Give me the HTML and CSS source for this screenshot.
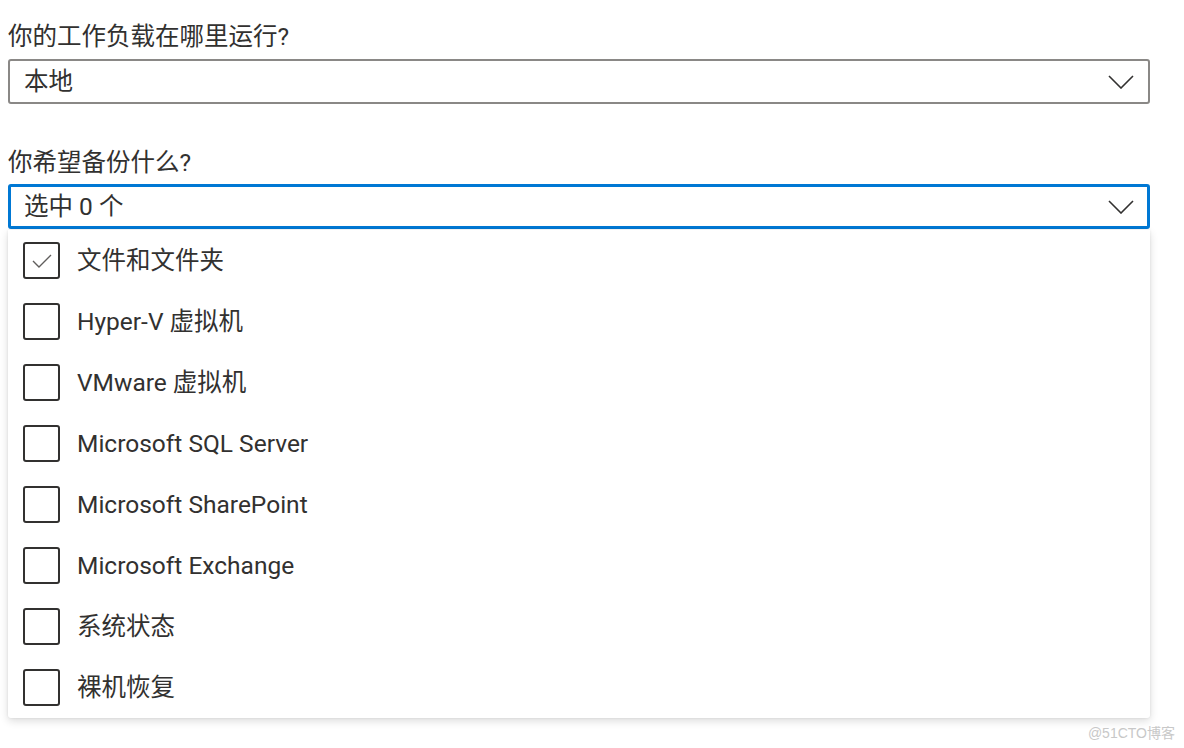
FILE: index.html
```html
<!DOCTYPE html>
<html lang="zh">
<head>
<meta charset="utf-8">
<link rel="stylesheet" href="styles.css">
</head>
<body>
<div class="page">
  <div class="label first">你的工作负载在哪里运行?</div>
  <div class="select">
    <span class="value">本地</span>
    <svg class="chev" width="26" height="14" viewBox="0 0 26 14"><path d="M1 1 L13 13 L25 1" fill="none" stroke="#323130" stroke-width="1.6"/></svg>
  </div>
  <div class="label second">你希望备份什么?</div>
  <div class="select focused">
    <span class="value">选中 0 个</span>
    <svg class="chev" width="26" height="14" viewBox="0 0 26 14"><path d="M1 1 L13 13 L25 1" fill="none" stroke="#323130" stroke-width="1.6"/></svg>
  </div>
  <div class="menu">
    <div class="item"><span class="box"><svg width="24" height="18" viewBox="0 0 24 18"><path d="M3 9 L9 15 L21 3" fill="none" stroke="#605e5c" stroke-width="1.4"/></svg></span><span class="text">文件和文件夹</span></div>
    <div class="item"><span class="box"></span><span class="text">Hyper-V 虚拟机</span></div>
    <div class="item"><span class="box"></span><span class="text">VMware 虚拟机</span></div>
    <div class="item"><span class="box"></span><span class="text">Microsoft SQL Server</span></div>
    <div class="item"><span class="box"></span><span class="text">Microsoft SharePoint</span></div>
    <div class="item"><span class="box"></span><span class="text">Microsoft Exchange</span></div>
    <div class="item"><span class="box"></span><span class="text">系统状态</span></div>
    <div class="item"><span class="box"></span><span class="text">裸机恢复</span></div>
  </div>
</div>
<div class="watermark">@51CTO博客</div>
</body>
</html>
```
FILE: styles.css
```css
html, body {
  margin: 0;
  padding: 0;
  background: #ffffff;
}
body {
  width: 1184px;
  height: 748px;
  position: relative;
  overflow: hidden;
  font-family: "Roboto", "Noto Sans CJK SC", sans-serif;
  color: #323130;
}
.page {
  padding: 21px 34px 0 8px;
  display: flex;
  flex-direction: column;
}
.label {
  font-size: 24.5px;
  line-height: 32px;
  height: 32px;
}
.label.first { margin-bottom: 6px; }
.label.second { margin-top: 43px; margin-bottom: 5px; }
.select {
  box-sizing: border-box;
  height: 45px;
  border: 2px solid #8a8886;
  border-radius: 3px;
  display: flex;
  align-items: center;
  justify-content: space-between;
  padding: 0 14px 0 14px;
}
.select.focused {
  border: 3px solid #0078d4;
  padding: 0 13px 0 13px;
}
.value {
  font-size: 24.5px;
  line-height: 30px;
}
.chev { display: block; }
.menu {
  margin-top: 1px;
  background: #fff;
  border-radius: 0 0 3px 3px;
  box-shadow: 0 3px 8px rgba(0,0,0,0.14), 0 0 3px rgba(0,0,0,0.08);
  display: flex;
  flex-direction: column;
}
.item {
  height: 61px;
  display: flex;
  align-items: center;
  padding-left: 15px;
}
.box {
  box-sizing: border-box;
  width: 37px;
  height: 37px;
  border: 2px solid #323130;
  border-radius: 3px;
  display: flex;
  align-items: center;
  justify-content: center;
  margin-right: 17px;
}
.box svg { display: block; }
.text {
  font-size: 24.5px;
  line-height: 30px;
}
.watermark {
  position: absolute;
  right: 9px;
  bottom: 6px;
  font-size: 14px;
  color: #c8c8c8;
  font-family: "Liberation Sans", "Noto Sans CJK SC", sans-serif;
}
```
